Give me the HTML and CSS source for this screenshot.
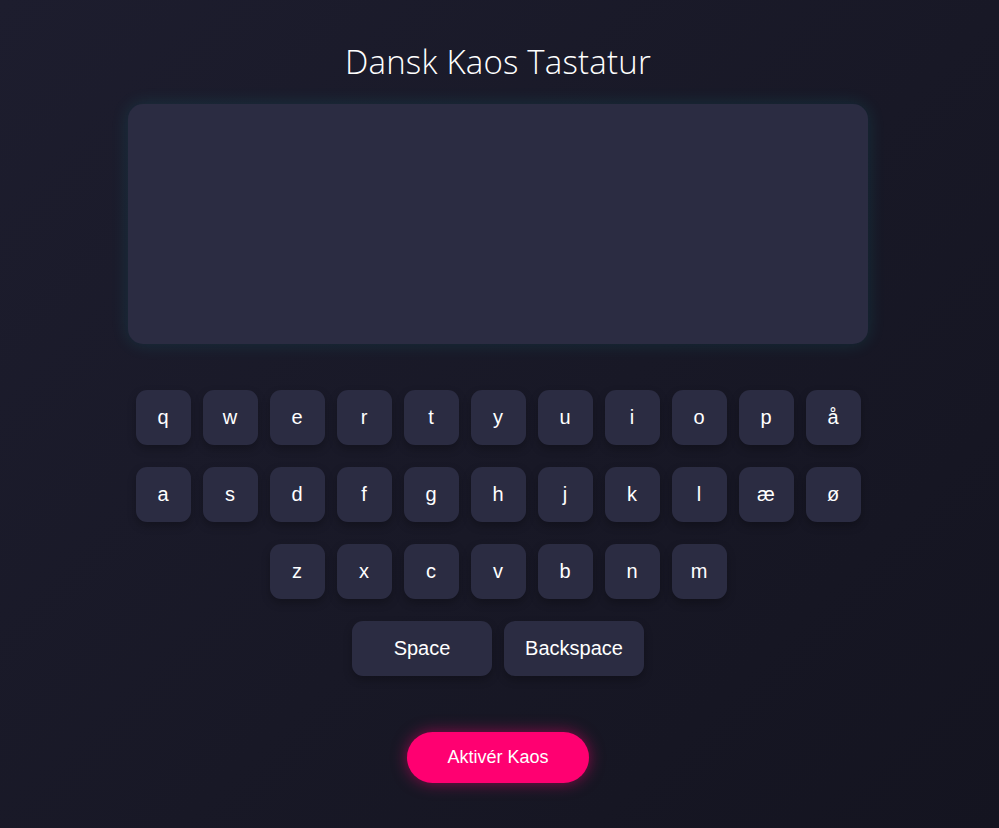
FILE: index.html
```html
<!DOCTYPE html>
<html lang="da">
<head>
<meta charset="utf-8">
<title>Dansk Kaos Tastatur</title>
<link rel="stylesheet" href="styles.css">
</head>
<body>
<main class="app">
  <h1 class="title">Dansk Kaos Tastatur</h1>
  <div class="output"></div>
  <div class="keyboard">
    <div class="row">
      <button class="key">q</button><button class="key">w</button><button class="key">e</button><button class="key">r</button><button class="key">t</button><button class="key">y</button><button class="key">u</button><button class="key">i</button><button class="key">o</button><button class="key">p</button><button class="key">å</button>
    </div>
    <div class="row">
      <button class="key">a</button><button class="key">s</button><button class="key">d</button><button class="key">f</button><button class="key">g</button><button class="key">h</button><button class="key">j</button><button class="key">k</button><button class="key">l</button><button class="key">æ</button><button class="key">ø</button>
    </div>
    <div class="row">
      <button class="key">z</button><button class="key">x</button><button class="key">c</button><button class="key">v</button><button class="key">b</button><button class="key">n</button><button class="key">m</button>
    </div>
    <div class="row">
      <button class="key wide">Space</button><button class="key wide">Backspace</button>
    </div>
  </div>
  <button class="chaos">Aktivér Kaos</button>
</main>
</body>
</html>
```

FILE: styles.css
```css
html, body {
  margin: 0;
  height: 100%;
}
body {
  background: linear-gradient(135deg, #1d1d2e 0%, #181826 55%, #141420 100%);
  color: #ffffff;
  font-family: "Liberation Sans", Arial, sans-serif;
}
.app {
  display: flex;
  flex-direction: column;
  align-items: center;
  padding-top: 43px;
  padding-right: 3px;
}
.title {
  margin: 0 0 23px;
  font-family: "Open Sans", "Noto Sans", sans-serif;
  font-weight: 300;
  font-size: 33px;
  line-height: 38px;
  letter-spacing: 0.2px;
  color: #ffffff;
}
.output {
  width: 740px;
  height: 240px;
  background: #2b2c42;
  border-radius: 15px;
  box-shadow: 0 0 18px rgba(0, 220, 220, 0.12);
}
.keyboard {
  margin-top: 46px;
  display: flex;
  flex-direction: column;
  gap: 22px;
}
.row {
  display: flex;
  justify-content: center;
  gap: 12px;
}
.key {
  width: 55px;
  height: 55px;
  border: none;
  border-radius: 11px;
  background: #2b2c42;
  color: #ffffff;
  font-family: "Liberation Sans", Arial, sans-serif;
  font-size: 20px;
  padding: 0;
  box-shadow: 0 4px 8px rgba(0, 0, 0, 0.25);
  cursor: pointer;
}
.key.wide {
  width: 140px;
}
.chaos {
  margin-top: 56px;
  width: 182px;
  height: 51px;
  border: none;
  border-radius: 26px;
  background: #ff0071;
  color: #ffffff;
  font-family: "Liberation Sans", Arial, sans-serif;
  font-size: 18px;
  box-shadow: 0 0 15px rgba(255, 0, 113, 0.5);
  cursor: pointer;
}
```
